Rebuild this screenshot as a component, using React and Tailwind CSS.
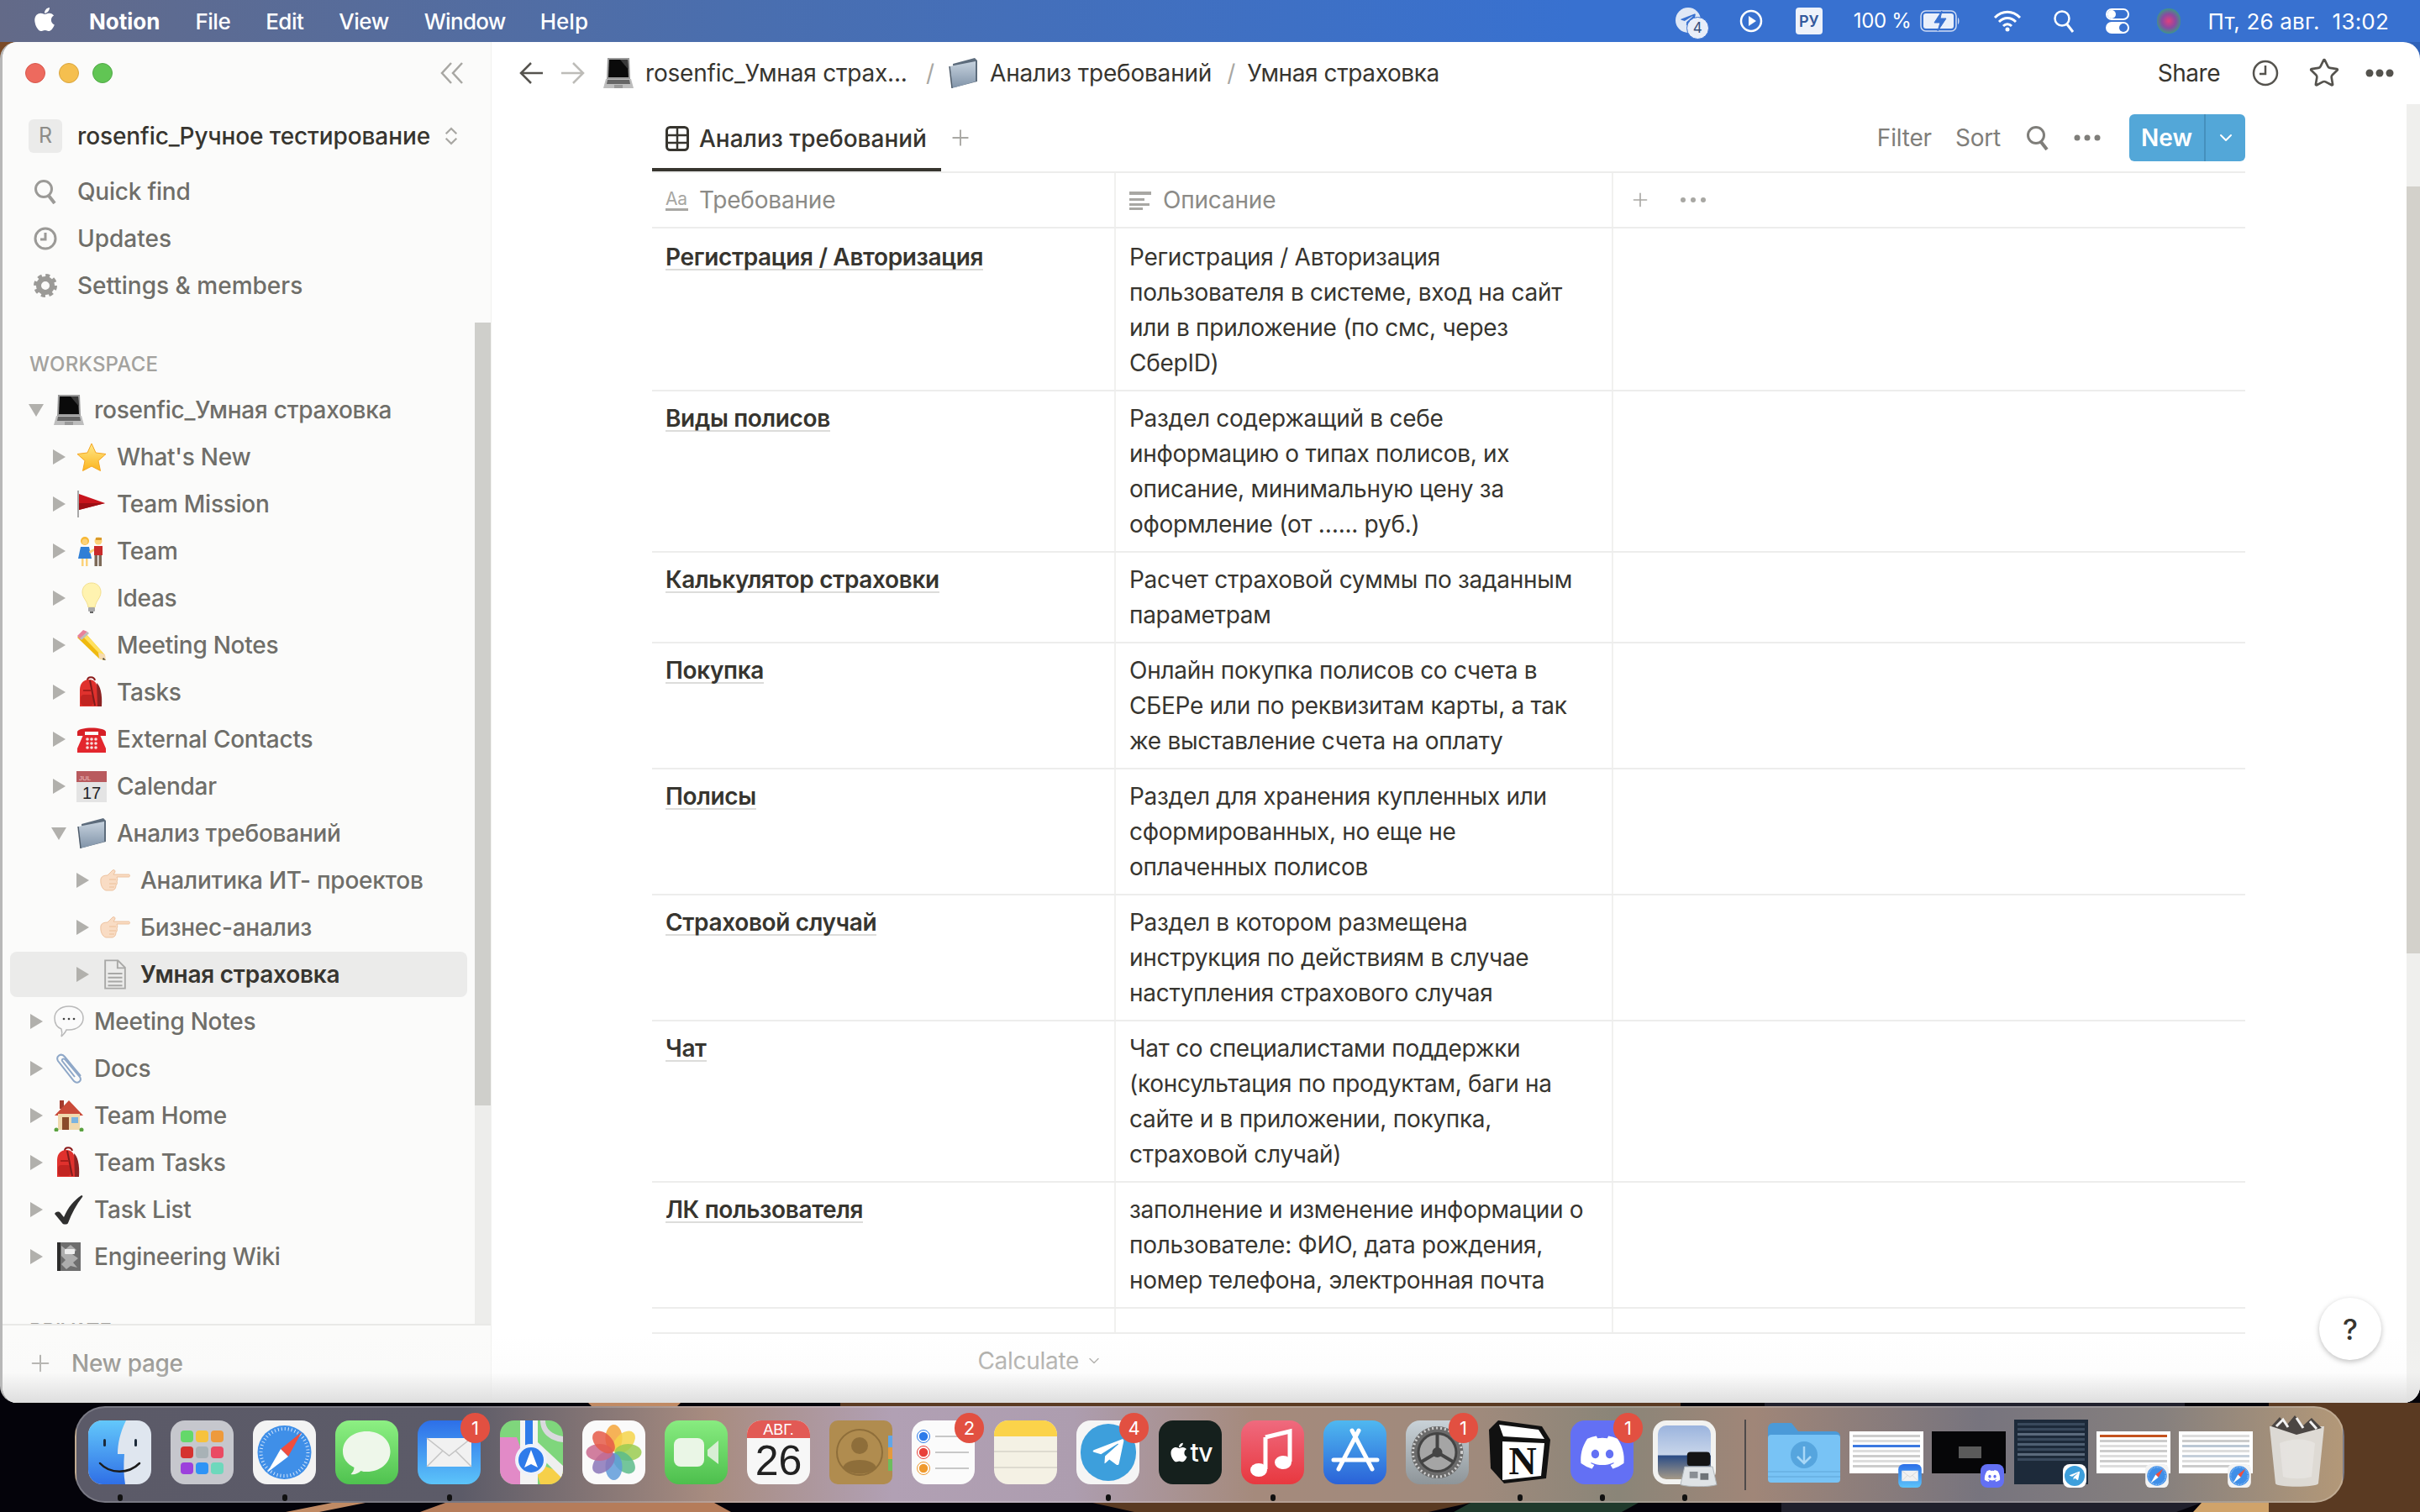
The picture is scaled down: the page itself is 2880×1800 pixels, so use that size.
import React from 'react';
import { FaApple, FaDiscord, FaTelegramPlane } from 'react-icons/fa';
import { ChevronDown, Plus, Star } from 'lucide-react';

/* ---------- page emoji (no colour emoji font on the box, so they are drawn) ---------- */
const Laptop = () => (
  <svg viewBox="0 0 36 38" className="w-[36px] h-[38px]">
    <path d="M5 1h26l1 25H4z" fill="#9a9a9a" />
    <path d="M7 3h22l1 21H6z" fill="#0a0a0a" />
    <path d="M20 3h9l1 12z" fill="#3a3a3a" />
    <path d="M3 26h30l3 11H0z" fill="#bdbdbd" />
    <path d="M5 27h26l1 5H4z" fill="#666" />
    <rect x="13" y="33" width="10" height="4" fill="#999" />
  </svg>
);
const StarE = () => (
  <svg viewBox="0 0 36 36" className="w-[36px] h-[36px]">
    <defs>
      <linearGradient id="st" x1="0" y1="0" x2="0" y2="1">
        <stop offset="0" stopColor="#ffe98a" />
        <stop offset="1" stopColor="#fbb41e" />
      </linearGradient>
    </defs>
    <path d="M18 2l5 11 12 1.500-9 8 2.500 12L18 29 7.500 34.500 10 22.500l-9-8L13 13z" fill="url(#st)" stroke="#f5a623" strokeWidth="1" strokeLinejoin="round" />
  </svg>
);
const Flag = () => (
  <svg viewBox="0 0 36 36" className="w-[36px] h-[36px]">
    <rect x="1" y="2" width="2" height="32" fill="#a8a8a8" />
    <path d="M3 6l31 11L3 25z" fill="#c8141c" />
    <path d="M3 17h31L3 25z" fill="#9c0e14" />
  </svg>
);
const Couple = () => (
  <svg viewBox="0 0 36 38" className="w-[36px] h-[38px]">
    <circle cx="10" cy="7" r="5" fill="#f7b733" />
    <circle cx="10" cy="8" r="3.500" fill="#fcd27a" />
    <path d="M5 14h10l3 14H2z" fill="#2f7fd6" />
    <rect x="6" y="28" width="2.500" height="9" fill="#fcd27a" />
    <rect x="11" y="28" width="2.500" height="9" fill="#fcd27a" />
    <circle cx="26" cy="7" r="4.500" fill="#fcd27a" />
    <path d="M23 3h7v3h-7z" fill="#d99a2b" />
    <rect x="21" y="13" width="10" height="11" fill="#c92a2a" />
    <rect x="21.500" y="24" width="3.500" height="13" fill="#7d6a58" />
    <rect x="26.500" y="24" width="3.500" height="13" fill="#7d6a58" />
    <path d="M15 19l6-3v3l-5 3z" fill="#fcd27a" />
  </svg>
);
const Bulb = () => (
  <svg viewBox="0 0 36 38" className="w-[36px] h-[38px]">
    <path d="M18 1c7 0 11 5 11 11 0 7-6 10-7 18h-8c-1-8-7-11-7-18C7 6 11 1 18 1z" fill="#fff3b0" stroke="#f3df8e" />
    <rect x="14" y="30" width="8" height="5" rx="1" fill="#a9a9a9" />
    <rect x="16" y="35" width="4" height="2" fill="#666" />
  </svg>
);
const Pencil = () => (
  <svg viewBox="0 0 36 38" className="w-[36px] h-[38px]">
    <path d="M9 3l25 28-1 6-6-2L1 10z" fill="#efb90f" />
    <path d="M9 3l25 28-3 2L5 6z" fill="#ffe15e" />
    <path d="M8 1L1 8l3 4 9-9z" fill="#e8829a" />
    <path d="M4 11l9-8 2 2-9 8z" fill="#bcbcbc" />
    <path d="M26 28l8 2 1 7-8-2z" fill="#f5dbb0" />
    <path d="M32 34l3 3-4-1z" fill="#333" />
  </svg>
);
const Bag = () => (
  <svg viewBox="0 0 36 38" className="w-[36px] h-[38px]">
    <path d="M13 5c0-5 8-5 9 0" fill="none" stroke="#8b1a1a" strokeWidth="2" />
    <path d="M4 16C4 8 9 4 15 4s10 4 10 12v20H4z" fill="#e0312d" />
    <path d="M24 8c4 3 7 12 6 28h-5z" fill="#8d2323" />
    <rect x="5" y="22" width="15" height="13" rx="4" fill="#c22421" />
    <path d="M16 5l6 30" stroke="#7d1c1c" strokeWidth="2" fill="none" />
    <rect x="8" y="16" width="10" height="2" fill="#a81e1b" />
  </svg>
);
const Phone = () => (
  <svg viewBox="0 0 36 36" className="w-[36px] h-[36px]">
    <path d="M1 9c2-6 32-6 34 0v5h-9V9H10v5H1z" fill="#d61f26" />
    <path d="M8 13h20l7 16v5H1v-5z" fill="#e3262d" />
    <g fill="#f6dede">
      <circle cx="13" cy="18" r="1.800" /><circle cx="18" cy="18" r="1.800" /><circle cx="23" cy="18" r="1.800" />
      <circle cx="13" cy="23" r="1.800" /><circle cx="18" cy="23" r="1.800" /><circle cx="23" cy="23" r="1.800" />
      <circle cx="13" cy="28" r="1.800" /><circle cx="18" cy="28" r="1.800" /><circle cx="23" cy="28" r="1.800" />
    </g>
  </svg>
);
const Cal = () => (
  <svg viewBox="0 0 36 38" className="w-[36px] h-[38px]">
    <rect y="1" width="36" height="13" fill="#b95a5e" />
    <rect y="14" width="36" height="24" fill="#e4e4e4" />
    <text x="3" y="12" fontSize="8" fill="#f0c5c5" fontFamily="Liberation Sans">JUL</text>
    <text x="18" y="34" textAnchor="middle" fontSize="20" fill="#222" fontFamily="Liberation Sans">17</text>
  </svg>
);
const Folder = () => (
  <svg viewBox="0 0 36 38" className="w-[36px] h-[38px]">
    <defs>
      <linearGradient id="fo" x1="0" y1="0" x2="0" y2="1"><stop offset="0" stopColor="#c6d2de" /><stop offset="1" stopColor="#8093a8" /></linearGradient>
    </defs>
    <path d="M6 8l26-7 3 3v25L8 36z" fill="#5d6c7c" />
    <path d="M2 11l31-6v24L5 37z" fill="url(#fo)" />
    <path d="M2 11l3 26" stroke="#4f5c6a" strokeWidth="1.500" />
  </svg>
);
const Hand = () => (
  <svg viewBox="0 0 36 26" className="w-[36px] h-[26px]">
    <path d="M1 11c1-3 4-4 8-4l6-6c2-1 3 0 3 2l-2 3h18c2 0 2 3 0 3H20c1 2 1 4 0 5 1 2 0 4-1 5 0 3-1 5-4 6H7c-4-1-7-7-6-14z" fill="#f9dcc4" stroke="#eab991" strokeWidth="0.800" />
    <path d="M11 12h8M11 17h8M11 21h6" stroke="#eab991" strokeWidth="0.800" />
  </svg>
);
const Doc = () => (
  <svg viewBox="0 0 28 38" className="w-[28px] h-[36px]">
    <path d="M1.500 1.500h16l9 9v26h-25z" fill="none" stroke="#a8a8a6" strokeWidth="2" />
    <path d="M17 2v9h9" fill="none" stroke="#a8a8a6" strokeWidth="2" />
    <path d="M5 18h18M5 23h18M5 28h18M5 33h18" stroke="#a8a8a6" strokeWidth="2" />
  </svg>
);
const Bubble = () => (
  <svg viewBox="0 0 36 38" className="w-[36px] h-[38px]">
    <path d="M18 1c10 0 17 6 17 14s-7 14-17 14h-3c-1 3-4 6-6 8 1-3 1-6 0-9C4 26 1 21 1 15 1 7 8 1 18 1z" fill="#fbfbfb" stroke="#b9b9b9" strokeWidth="1.500" />
    <circle cx="12" cy="16" r="1.300" fill="#444" /><circle cx="18" cy="16" r="1.300" fill="#444" /><circle cx="24" cy="16" r="1.300" fill="#444" />
  </svg>
);
const Clip = () => (
  <svg viewBox="0 0 36 38" className="w-[36px] h-[38px]">
    <path d="M32 28L13 5C9 0 2 4 5 10l19 24c4 4 10 0 7-5L14 9c-2-3-5-1-4 1l15 19" fill="none" stroke="#8fa8c8" strokeWidth="2" />
  </svg>
);
const House = () => (
  <svg viewBox="0 0 36 38" className="w-[36px] h-[38px]">
    <rect x="7" y="1" width="5" height="10" fill="#a33a2c" />
    <path d="M18 1L1 19h34z" fill="#c94a38" />
    <rect x="5" y="17" width="26" height="19" fill="#f0d9ae" />
    <rect x="10" y="21" width="8" height="15" fill="#8a4b2b" />
    <rect x="21" y="21" width="8" height="7" fill="#7cb4e0" />
    <circle cx="3" cy="36" r="2.500" fill="#5aa13f" /><circle cx="33" cy="36" r="2.500" fill="#5aa13f" />
  </svg>
);
const Check = () => (
  <svg viewBox="0 0 36 36" className="w-[36px] h-[36px]">
    <path d="M1 23c2-3 5-3 7-1l4 5C17 15 24 7 33 1c1 0 2 1 1 2-7 9-13 20-17 31-1 2-6 2-7 0z" fill="#2f2f2f" />
  </svg>
);
const Note = () => (
  <svg viewBox="0 0 32 38" className="w-[32px] h-[38px]">
    <rect x="2" y="2" width="28" height="34" fill="#2c2c2c" />
    <rect x="6" y="2" width="24" height="34" fill="#6e6e6e" />
    <path d="M7 6l5 4 6-5 7 6-5 5 7 5-6 5 5 6-8-2-5 4-6-6 5-5-5-5z" fill="#cfcfcf" opacity=".65" />
    <rect x="11" y="10" width="12" height="6" rx="1" fill="#eee" />
  </svg>
);

/* ---------- small ui glyphs ---------- */
const Tri = ({ open }) => (
  <svg viewBox="0 0 18 18" className="w-[18px] h-[18px]">
    {open ? <path d="M0 2h18L9 17z" fill="#b1b0ac" /> : <path d="M2 0l15 9-15 9z" fill="#b1b0ac" />}
  </svg>
);
const Dots = ({ r = 3.500, color = '#37352f' }) => (
  <svg viewBox="0 0 36 10" className="w-[36px] h-[10px]">
    <circle cx="6" cy="5" r={r} fill={color} />
    <circle cx="18" cy="5" r={r} fill={color} />
    <circle cx="30" cy="5" r={r} fill={color} />
  </svg>
);
const Search = ({ color, w = 28 }) => (
  <svg viewBox="0 0 28 30" style={{ width: w }} className="h-[30px]">
    <circle cx="12" cy="12" r="9.500" fill="none" stroke={color} strokeWidth="3" />
    <path d="M18 20l7 9" stroke={color} strokeWidth="4" />
  </svg>
);

const tree = [
  { t: 'rosenfic_Умная страховка', l: 0, E: Laptop, open: true },
  { t: "What's New", l: 1, E: StarE },
  { t: 'Team Mission', l: 1, E: Flag },
  { t: 'Team', l: 1, E: Couple },
  { t: 'Ideas', l: 1, E: Bulb },
  { t: 'Meeting Notes', l: 1, E: Pencil },
  { t: 'Tasks', l: 1, E: Bag },
  { t: 'External Contacts', l: 1, E: Phone },
  { t: 'Calendar', l: 1, E: Cal },
  { t: 'Анализ требований', l: 1, E: Folder, open: true },
  { t: 'Аналитика ИТ- проектов', l: 2, E: Hand },
  { t: 'Бизнес-анализ', l: 2, E: Hand },
  { t: 'Умная страховка', l: 2, E: Doc, active: true },
  { t: 'Meeting Notes', l: 0, E: Bubble },
  { t: 'Docs', l: 0, E: Clip },
  { t: 'Team Home', l: 0, E: House },
  { t: 'Team Tasks', l: 0, E: Bag },
  { t: 'Task List', l: 0, E: Check },
  { t: 'Engineering Wiki', l: 0, E: Note },
];
const indent = ['pl-[30px]', 'pl-[57px]', 'pl-[85px]'];

const rows = [
  ['Регистрация / Авторизация', ['Регистрация / Авторизация', 'пользователя в системе, вход на сайт', 'или в приложение (по смс, через', 'СберID)']],
  ['Виды полисов', ['Раздел содержащий в себе', 'информацию о типах полисов, их', 'описание, минимальную цену за', 'оформление (от …... руб.)']],
  ['Калькулятор страховки', ['Расчет страховой суммы по заданным', 'параметрам']],
  ['Покупка', ['Онлайн покупка полисов со счета в', 'СБЕРе или по реквизитам карты, а так', 'же выставление счета на оплату']],
  ['Полисы', ['Раздел для хранения купленных или', 'сформированных, но еще не', 'оплаченных полисов']],
  ['Страховой случай', ['Раздел в котором размещена', 'инструкция по действиям в случае', 'наступления страхового случая']],
  ['Чат', ['Чат со специалистами поддержки', '(консультация по продуктам, баги на', 'сайте и в приложении, покупка,', 'страховой случай)']],
  ['ЛК пользователя', ['заполнение и изменение информации о', 'пользователе: ФИО, дата рождения,', 'номер телефона, электронная почта']],
];

function Sidebar() {
  return (
    <aside className="w-[582px] shrink-0 flex flex-col bg-[#fbfbfa] border-r border-[#f1f1ef]">
      <div className="h-[74px] flex items-center pl-[27px] pr-[32px]">
        <span className="w-[24px] h-[24px] rounded-full bg-[#ed6a5e] border border-[#d8574c]" />
        <span className="w-[24px] h-[24px] rounded-full bg-[#f5bf4f] border border-[#d9a53e] ml-[16px]" />
        <span className="w-[24px] h-[24px] rounded-full bg-[#61c554] border border-[#52a948] ml-[16px]" />
        <svg viewBox="0 0 28 26" className="w-[28px] h-[26px] ml-auto">
          <path d="M13 1L2 13l11 12M26 1L15 13l11 12" fill="none" stroke="#a8a7a3" strokeWidth="2.500" />
        </svg>
      </div>
      <div className="h-[76px] flex items-center pl-[31px]">
        <span className="w-[40px] h-[40px] rounded-[6px] bg-[#ebebea] text-[#8d8c88] text-[25px] flex items-center justify-center">R</span>
        <span className="ml-[18px] text-[28px] font-medium text-[#37352f] tracking-[-0.1px] whitespace-nowrap">rosenfic_Ручное тестирование</span>
        <svg viewBox="0 0 20 26" className="w-[18px] h-[24px] ml-[16px]">
          <path d="M3 10l7-7 7 7M3 16l7 7 7-7" fill="none" stroke="#a8a7a3" strokeWidth="2.500" />
        </svg>
      </div>
      <div className="text-[28px] text-[#6f6e69] font-medium">
        <div className="h-[56px] flex items-center pl-[37px]">
          <Search color="#9b9a97" />
          <span className="ml-[24px] tracking-[-0.2px]">Quick find</span>
        </div>
        <div className="h-[56px] flex items-center pl-[37px]">
          <svg viewBox="0 0 28 28" className="w-[28px] h-[28px]">
            <circle cx="14" cy="14" r="12" fill="none" stroke="#9b9a97" strokeWidth="3" />
            <path d="M14 7v8H8" fill="none" stroke="#9b9a97" strokeWidth="3" />
          </svg>
          <span className="ml-[24px]">Updates</span>
        </div>
        <div className="h-[56px] flex items-center pl-[37px]">
          <svg viewBox="0 0 28 28" className="w-[28px] h-[28px]">
            <circle cx="14" cy="14" r="8" fill="none" stroke="#9b9a97" strokeWidth="6" />
            <circle cx="14" cy="14" r="12" fill="none" stroke="#9b9a97" strokeWidth="4" strokeDasharray="5 4.400" />
          </svg>
          <span className="ml-[24px]">Settings &amp; members</span>
        </div>
      </div>
      <div className="flex h-[1208px] overflow-hidden">
        <div className="w-[562px] shrink-0">
          <div className="h-[92px] pt-[51px] pl-[32px] text-[24px] leading-[30px] font-medium text-[#a3a29e] tracking-[0.2px]">WORKSPACE</div>
          {tree.map((r, i) => (
            <div
              key={i}
              className={r.active
                ? 'h-[54px] my-[1px] ml-[9px] w-[544px] pl-[76px] flex items-center rounded-[8px] bg-[#ebebea] text-[#37352f] font-semibold'
                : 'h-[56px] flex items-center text-[#6f6e69] font-medium ' + indent[r.l]}
            >
              <span className="w-[20px] flex justify-center"><Tri open={r.open} /></span>
              <span className="w-[36px] h-[40px] ml-[11px] flex items-center justify-center shrink-0"><r.E /></span>
              <span className="ml-[12px] text-[28px] tracking-[-0.25px] whitespace-nowrap">{r.t}</span>
            </div>
          ))}
          <div className="mt-[46px] pl-[32px] text-[24px] leading-[30px] font-medium text-[#a3a29e]">PRIVATE</div>
        </div>
        <div className="w-[20px] mt-[16px] bg-[#ededeb]">
          <div className="h-[932px] bg-[#cfcfcb]" />
        </div>
      </div>
      <div className="h-[92px] shrink-0 border-t-2 border-[#e9e9e7] flex items-center pl-[29px] text-[28px] text-[#8a8984]">
        <Plus size={32} strokeWidth={1.500} color="#a8a7a3" />
        <span className="ml-[21px] font-medium tracking-[-0.3px]">New page</span>
      </div>
    </aside>
  );
}

function TopBar() {
  return (
    <header className="h-[74px] shrink-0 flex items-center pl-[33px] text-[28px] text-[#37352f] whitespace-nowrap">
      <svg viewBox="0 0 30 30" className="w-[30px] h-[30px]">
        <path d="M14 3L2 15l12 12M2 15h26" fill="none" stroke="#55534e" strokeWidth="2.500" />
      </svg>
      <svg viewBox="0 0 30 30" className="w-[30px] h-[30px] ml-[18px]">
        <path d="M16 3l12 12-12 12M28 15H2" fill="none" stroke="#bdbcb8" strokeWidth="2.500" />
      </svg>
      <span className="ml-[22px] w-[36px]"><Laptop /></span>
      <span className="ml-[14px] w-[310px] tracking-[-0.2px]">rosenfic_Умная страх...</span>
      <span className="ml-[24px] text-[#a8a7a3]">/</span>
      <span className="ml-[16px] w-[36px]"><Folder /></span>
      <span className="ml-[14px] tracking-[-0.2px]">Анализ требований</span>
      <span className="ml-[18px] text-[#a8a7a3]">/</span>
      <span className="ml-[14px] tracking-[-0.4px]">Умная страховка</span>
      <span className="ml-auto tracking-[-0.5px]">Share</span>
      <svg viewBox="0 0 32 34" className="w-[32px] h-[34px] ml-[38px]">
        <circle cx="16" cy="17" r="14" fill="none" stroke="#55534e" strokeWidth="2.500" />
        <path d="M16 8v10h-7" fill="none" stroke="#55534e" strokeWidth="2.500" />
      </svg>
      <Star size={38} strokeWidth={1.700} color="#55534e" className="ml-[35px]" />
      <span className="ml-[29px] mr-[30px]"><Dots r={4.500} color="#55534e" /></span>
    </header>
  );
}

function Toolbar() {
  return (
    <div className="h-[82px] flex border-b-2 border-[#ededec] text-[28px]">
      <div className="w-[344px] h-[80px] border-b-4 border-[#37352f] flex items-center pl-[16px] pt-[6px] font-medium text-[#37352f]">
        <svg viewBox="0 0 28 30" className="w-[28px] h-[30px]">
          <rect x="1.500" y="1.500" width="25" height="27" rx="4" fill="none" stroke="#37352f" strokeWidth="3" />
          <path d="M2 11h24M2 20h24M14 2v26" stroke="#37352f" strokeWidth="2.500" />
        </svg>
        <span className="ml-[12px] whitespace-nowrap">Анализ требований</span>
      </div>
      <Plus size={30} strokeWidth={1.500} color="#a8a7a3" className="ml-[8px] mt-[25px]" />
      <div className="ml-auto flex items-center text-[#7f7e7a]">
        <span className="tracking-[-0.2px]">Filter</span>
        <span className="ml-[28px] tracking-[-0.2px]">Sort</span>
        <span className="ml-[30px]"><Search color="#7f7e7a" /></span>
        <span className="ml-[27px]"><Dots r={3.500} color="#7f7e7a" /></span>
        <div className="ml-[32px] w-[138px] h-[56px] rounded-[6px] bg-[#53a7d8] flex text-white font-semibold">
          <span className="w-[91px] pl-[14px] flex items-center border-r-2 border-[#4590bd]">New</span>
          <span className="flex-1 flex items-center justify-center"><ChevronDown size={24} strokeWidth={2} /></span>
        </div>
      </div>
    </div>
  );
}

function Table() {
  return (
    <div className="text-[28px] leading-[42px] text-[#37352f]">
      <div className="h-[66px] flex border-b-2 border-[#ededec] text-[#8c8b87] tracking-[-0.2px]">
        <div className="w-[552px] flex items-center pl-[16px] border-r-2 border-[#f1f1ef]">
          <svg viewBox="0 0 28 30" className="w-[28px] h-[30px]">
            <text x="0" y="21" fontSize="21" fill="#a8a7a3" fontFamily="Inter">Aa</text>
            <rect y="25" width="27" height="3" fill="#a8a7a3" />
          </svg>
          <span className="ml-[12px]">Требование</span>
        </div>
        <div className="w-[592px] flex items-center pl-[16px] border-r-2 border-[#f1f1ef]">
          <svg viewBox="0 0 26 26" className="w-[26px] h-[26px]">
            <path d="M0 3h26v4H0zM0 11h18v3H0zM0 17h24v3H0zM0 22h16v3H0z" fill="#a8a7a3" />
          </svg>
          <span className="ml-[14px]">Описание</span>
        </div>
        <div className="flex items-center pl-[19px]">
          <Plus size={26} strokeWidth={1.500} color="#a8a7a3" />
          <span className="ml-[32px]"><Dots r={3} color="#a8a7a3" /></span>
        </div>
      </div>
      {rows.map(([title, lines], i) => (
        <div key={title} className="flex border-b-2 border-[#ededec] whitespace-nowrap">
          <div className={'w-[552px] shrink-0 pl-[16px] pb-[11px] border-r-2 border-[#f1f1ef] font-semibold tracking-[-0.35px] ' + (i === 0 ? 'pt-[13px]' : 'pt-[11px]')}>
            <span className="border-b-2 border-[#dcdcda] leading-[28px] inline-block">{title}</span>
          </div>
          <div className={'w-[592px] shrink-0 pl-[16px] pb-[11px] border-r-2 border-[#f1f1ef] tracking-[-0.28px] ' + (i === 0 ? 'pt-[13px]' : 'pt-[11px]')}>
            {lines.map((l) => <div key={l}>{l}</div>)}
          </div>
        </div>
      ))}
      <div className="h-[30px] flex border-b-2 border-[#ededec]">
        <div className="w-[552px] border-r-2 border-[#f1f1ef]" />
        <div className="w-[592px] border-r-2 border-[#f1f1ef]" />
      </div>
      <div className="w-[552px] h-[64px] flex items-center justify-end pr-[16px] text-[#a8a7a3]">
        <span className="tracking-[-0.3px]">Calculate</span>
        <ChevronDown size={20} strokeWidth={1.800} className="ml-[8px]" />
      </div>
    </div>
  );
}

/* ---------- dock ---------- */
const Sq = ({ children, className }) => <div className={'w-[75px] h-[76px] rounded-[17px] overflow-hidden flex items-center justify-center ' + className}>{children}</div>;

const Finder = () => (
  <svg viewBox="0 0 75 76" className="w-[75px] h-[76px]">
    <defs>
      <linearGradient id="fi" x1="0" y1="0" x2="0" y2="1"><stop offset="0" stopColor="#63c8fb" /><stop offset="1" stopColor="#2f6fe6" /></linearGradient>
      <clipPath id="fc"><rect width="75" height="76" rx="17" /></clipPath>
    </defs>
    <g clipPath="url(#fc)">
      <rect width="75" height="76" fill="#dfe6ef" />
      <path d="M0 0h45c-7 14-10 28-10 40h8c-1 12-1 24 1 36H0z" fill="url(#fi)" />
    </g>
    <rect x="18" y="22" width="3" height="9" rx="1.500" fill="#1c2a3a" />
    <rect x="55" y="22" width="3" height="9" rx="1.500" fill="#1c2a3a" />
    <path d="M14 51c12 13 34 13 47 0" fill="none" stroke="#1c1c1c" strokeWidth="2.500" strokeLinecap="round" />
  </svg>
);
const Launchpad = () => (
  <Sq className="bg-[#c6c7cd]">
    <div className="grid grid-cols-3 gap-x-[3px] gap-y-[5px]">
      {['bg-[#64d86a]', 'bg-[#f6c23d]', 'bg-[#ee9a3c]', 'bg-[#d5322f]', 'bg-[#a8b2b6]', 'bg-[#ea4a63]', 'bg-[#9c40dc]', 'bg-[#2e93f5]', 'bg-[#6ed8bc]'].map((c) => (
        <span key={c} className={'w-[15px] h-[14px] rounded-[4px] ' + c} />
      ))}
    </div>
  </Sq>
);
const Safari = ({ className = 'w-[75px] h-[76px]' }) => (
  <svg viewBox="0 0 75 76" className={className}>
    <rect width="75" height="76" rx="17" fill="#f3f3f3" />
    <circle cx="37.500" cy="38" r="32" fill="#3f8fe8" />
    <circle cx="37.500" cy="38" r="28" fill="none" stroke="#d5e6fa" strokeWidth="4" strokeDasharray="1 3" />
    <path d="M58 14L33 34l9 9z" fill="#f04e3e" />
    <path d="M17 62l25-19-9-9z" fill="#fff" />
  </svg>
);
const Messages = () => (
  <svg viewBox="0 0 75 76" className="w-[75px] h-[76px]">
    <defs><linearGradient id="ms" x1="0" y1="0" x2="0" y2="1"><stop offset="0" stopColor="#8df083" /><stop offset="1" stopColor="#4fc24f" /></linearGradient></defs>
    <rect width="75" height="76" rx="17" fill="url(#ms)" />
    <path d="M37.500 13c16 0 28 10 28 24s-12 24-28 24c-3 0-5 0-7-1-3 3-8 5-12 4 2-2 4-5 4-8C14 52 9 45 9 37c0-14 12-24 28.500-24z" fill="#eef7ea" />
  </svg>
);
const Mail = ({ className = 'w-[75px] h-[76px]' }) => (
  <svg viewBox="0 0 75 76" className={className}>
    <defs><linearGradient id="ml" x1="0" y1="0" x2="0" y2="1"><stop offset="0" stopColor="#2d6fe8" /><stop offset="1" stopColor="#5cc4fa" /></linearGradient></defs>
    <rect width="75" height="76" rx="17" fill="url(#ml)" />
    <rect x="11" y="21" width="53" height="34" rx="2" fill="#f1f1f1" />
    <path d="M11 21l26.500 21L64 21M11 55l19-19M64 55L45 36" fill="none" stroke="#c4c4c4" strokeWidth="1.500" />
  </svg>
);
const Maps = () => (
  <svg viewBox="0 0 75 76" className="w-[75px] h-[76px]">
    <defs><clipPath id="mc"><rect width="75" height="76" rx="17" /></clipPath></defs>
    <g clipPath="url(#mc)">
      <rect width="75" height="76" fill="#7fd67c" />
      <path d="M0 20h20l20 56H0z" fill="#e28ac7" />
      <path d="M40 50l35 12v14H48z" fill="#f6d04a" />
      <rect x="24" y="0" width="21" height="76" fill="#f3f3f3" />
      <rect x="30" y="0" width="9" height="32" fill="#2e7bea" />
      <path d="M48 0c0 14 10 24 27 26v-7C62 17 54 10 54 0z" fill="#d9d9dd" />
      <path d="M45 40l30 30v-16L45 26z" fill="#efefef" />
      <circle cx="37" cy="47" r="19" fill="#eef2fa" />
      <circle cx="37" cy="47" r="15" fill="#2e7bea" />
      <path d="M37 35l8 21-8-4-8 4z" fill="#fff" />
    </g>
  </svg>
);
const Photos = () => (
  <svg viewBox="0 0 75 76" className="w-[75px] h-[76px]">
    <rect width="75" height="76" rx="17" fill="#fafafa" />
    {['#f5a43a', '#f4d44a', '#9acb50', '#5cbb8a', '#5f9bd9', '#8a75b8', '#c9688e', '#e55a48'].map((c, i) => (
      <ellipse key={c} cx="37.500" cy="21" rx="10" ry="16" fill={c} opacity=".85" transform={'rotate(' + i * 45 + ' 37.500 38)'} />
    ))}
  </svg>
);
const FaceTime = () => (
  <svg viewBox="0 0 75 76" className="w-[75px] h-[76px]">
    <defs><linearGradient id="ft" x1="0" y1="0" x2="0" y2="1"><stop offset="0" stopColor="#88ec80" /><stop offset="1" stopColor="#4dbf4d" /></linearGradient></defs>
    <rect width="75" height="76" rx="17" fill="url(#ft)" />
    <rect x="11" y="21" width="36" height="34" rx="8" fill="#eaf6e6" />
    <path d="M51 35l13-11v28L51 42z" fill="#d8eed4" />
  </svg>
);
const CalIcon = () => (
  <div className="w-[75px] h-[76px] rounded-[17px] overflow-hidden bg-[#f7f7f7] flex flex-col items-center font-[family-name:'Liberation_Sans',sans-serif]">
    <div className="w-full h-[21px] bg-[#e25a55] text-white text-[18px] leading-[22px] text-center">АВГ.</div>
    <div className="text-[50px] leading-[54px] text-[#222]">26</div>
  </div>
);
const Contacts = () => (
  <svg viewBox="0 0 75 76" className="w-[75px] h-[76px]">
    <rect width="75" height="76" rx="10" fill="#b08c4f" />
    <rect x="70" y="18" width="5" height="14" fill="#60a6e8" /><rect x="70" y="32" width="5" height="14" fill="#e59a3c" /><rect x="70" y="46" width="5" height="14" fill="#6cbd5d" />
    <circle cx="36" cy="38" r="27" fill="none" stroke="#8e6e3a" strokeWidth="2" />
    <circle cx="36" cy="30" r="10" fill="#8e6e3a" />
    <path d="M16 56c4-12 36-12 40 0-10 10-30 10-40 0z" fill="#8e6e3a" />
  </svg>
);
const Reminders = () => (
  <svg viewBox="0 0 75 76" className="w-[75px] h-[76px]">
    <rect width="75" height="76" rx="17" fill="#fbfbfb" />
    {[['#2e7bea', 19], ['#e8403a', 38], ['#ef9a2e', 57]].map(([c, y]) => (
      <g key={c}>
        <circle cx="14" cy={y} r="6" fill={c} stroke="#fff" strokeWidth="1.500" />
        <circle cx="14" cy={y} r="7.500" fill="none" stroke={c} />
        <rect x="28" y={y - 1} width="40" height="2" fill="#c8c8c8" />
      </g>
    ))}
  </svg>
);
const Notes = () => (
  <svg viewBox="0 0 75 76" className="w-[75px] h-[76px]">
    <defs><clipPath id="nc"><rect width="75" height="76" rx="17" /></clipPath></defs>
    <g clipPath="url(#nc)">
      <rect width="75" height="76" fill="#f4f1e4" />
      <rect width="75" height="19" fill="#fbd34a" />
      <path d="M0 37h75M0 56h75" stroke="#d6d3c8" strokeWidth="1.500" />
    </g>
  </svg>
);
const Telegram = () => (
  <Sq className="bg-[#f5f5f5]">
    <div className="w-[66px] h-[68px] rounded-full bg-[#3d9fdc] flex items-center justify-center text-white"><FaTelegramPlane size={42} /></div>
  </Sq>
);
const TV = () => (
  <Sq className="bg-[#15201d] text-white">
    <FaApple size={26} />
    <span className="text-[30px] font-medium leading-none tracking-[-1px]">tv</span>
  </Sq>
);
const Music = () => (
  <svg viewBox="0 0 75 76" className="w-[75px] h-[76px]">
    <defs><linearGradient id="mu" x1="0" y1="0" x2="0" y2="1"><stop offset="0" stopColor="#ef6a7e" /><stop offset="1" stopColor="#e8383f" /></linearGradient></defs>
    <rect width="75" height="76" rx="17" fill="url(#mu)" />
    <path d="M29 20l29-7v36" fill="none" stroke="#fff" strokeWidth="5" />
    <path d="M29 20v38" stroke="#fff" strokeWidth="5" />
    <ellipse cx="21" cy="59" rx="10" ry="8" fill="#fff" /><ellipse cx="50" cy="50" rx="10" ry="8" fill="#fff" />
  </svg>
);
const AppStore = () => (
  <svg viewBox="0 0 75 76" className="w-[75px] h-[76px]">
    <defs><linearGradient id="as" x1="0" y1="0" x2="0" y2="1"><stop offset="0" stopColor="#4fb8f0" /><stop offset="1" stopColor="#2a62d8" /></linearGradient></defs>
    <rect width="75" height="76" rx="17" fill="url(#as)" />
    <path d="M42 12L18 58M34 12l24 46M12 47h52" stroke="#fff" strokeWidth="5" strokeLinecap="round" fill="none" />
  </svg>
);
const Gear = () => (
  <svg viewBox="0 0 75 76" className="w-[75px] h-[76px]">
    <defs><linearGradient id="ge" x1="0" y1="0" x2="0" y2="1"><stop offset="0" stopColor="#c9d2d8" /><stop offset="1" stopColor="#8e9599" /></linearGradient></defs>
    <rect width="75" height="76" rx="17" fill="url(#ge)" />
    <circle cx="37.500" cy="38" r="31" fill="#6b6b6b" />
    <circle cx="37.500" cy="38" r="29" fill="none" stroke="#d0d0d0" strokeWidth="3" strokeDasharray="2 3" />
    <circle cx="37.500" cy="38" r="24" fill="#444" />
    <circle cx="37.500" cy="38" r="21" fill="#a5a5a5" />
    <circle cx="37.500" cy="38" r="6" fill="#444" />
    <path d="M37.500 38V17M37.500 38L19 49M37.500 38L56 49" stroke="#444" strokeWidth="4" />
  </svg>
);
const NotionIcon = () => (
  <svg viewBox="0 0 75 80" className="w-[75px] h-[80px] -mt-[3px]">
    <path d="M12 3l52 7 10 16-5 46-50 6-16-18L1 14z" fill="#111" />
    <path d="M13 8l47 6 7 11-49-3z" fill="#fff" />
    <path d="M17 28l50 2-4 39-46 5z" fill="#fff" />
    <text x="41" y="67" textAnchor="middle" fontSize="46" fontWeight="700" fontFamily="Liberation Serif" fill="#111">N</text>
  </svg>
);
const Discord = () => (
  <Sq className="bg-[#6370f4] text-white"><FaDiscord size={56} /></Sq>
);
const Preview = () => (
  <div className="w-[75px] h-[76px] relative">
    <svg viewBox="0 0 75 76" className="w-[75px] h-[76px]">
      <defs>
        <linearGradient id="pv" x1="0" y1="0" x2="0" y2="1"><stop offset="0" stopColor="#9bb4de" /><stop offset=".55" stopColor="#c9d6ea" /><stop offset=".56" stopColor="#2a4c86" /><stop offset="1" stopColor="#a59a88" /></linearGradient>
      </defs>
      <rect width="75" height="76" rx="16" fill="#f2f2f0" />
      <rect x="6" y="6" width="63" height="64" rx="10" fill="url(#pv)" />
    </svg>
    <svg viewBox="0 0 46 42" className="absolute -right-[2px] -bottom-[3px] w-[45px] h-[42px]">
      <rect x="9" y="0" width="28" height="17" rx="4" fill="#141414" />
      <path d="M6 18h34l5 22c-10 3-34 3-44 0z" fill="#dfe3e6" stroke="#aeb4b8" />
      <rect x="12" y="24" width="10" height="8" fill="#8a8f94" /><rect x="25" y="26" width="10" height="8" fill="#6f7478" />
    </svg>
  </div>
);
const DownloadsFolder = () => (
  <svg viewBox="0 0 86 74" className="w-[86px] h-[74px]">
    <path d="M0 8a6 6 0 0 1 6-6h22l8 10h44a6 6 0 0 1 6 6v12H0z" fill="#4b9ad8" />
    <path d="M0 20a4 4 0 0 1 4-4h78a4 4 0 0 1 4 4v49a4 4 0 0 1-4 4H4a4 4 0 0 1-4-4z" fill="#78c3f5" />
    <path d="M0 60h86M0 66h86" stroke="#6bb4e6" strokeWidth="2" />
    <ellipse cx="43" cy="40" rx="16" ry="16" fill="#56a5de" />
    <path d="M43 30v20M35 42l8 8 8-8" fill="none" stroke="#a8d8f8" strokeWidth="2.500" />
  </svg>
);
const Trash = () => (
  <svg viewBox="0 0 68 88" className="w-[68px] h-[88px]">
    <path d="M2 14l7 68c1 5 49 5 51 0l7-68z" fill="#e6e6e4" opacity=".85" />
    <path d="M4 14L14 3l8 10L32 1l10 12 10-9 12 12-30 8z" fill="#4b4643" />
    <path d="M10 14l8-8 6 9M34 4l8 12M50 8l8 9" stroke="#f2f2f2" strokeWidth="3" fill="none" />
    <path d="M14 34c14-6 32-6 42 0l-4 40c-10 3-24 3-34 0z" fill="#fff" opacity=".25" />
  </svg>
);

const Thumb = ({ className, lines, children, tall }) => (
  <div className={'w-[88px] shrink-0 relative ' + (tall ? 'h-[77px] -mt-[1px] ' : 'h-[50px] mt-[13px] ') + className}>
    {lines && (
      <div className="p-[4px] flex flex-col gap-[3px]">
        {lines.map((c, i) => <span key={i} className={'block h-[3px] ' + c} />)}
      </div>
    )}
    {children}
  </div>
);

const dock = [
  { I: Finder, dot: true }, { I: Launchpad }, { I: Safari, dot: true }, { I: Messages },
  { I: Mail, badge: 1, dot: true }, { I: Maps }, { I: Photos }, { I: FaceTime }, { I: CalIcon }, { I: Contacts },
  { I: Reminders, badge: 2 }, { I: Notes }, { I: Telegram, badge: 4, dot: true }, { I: TV },
  { I: Music, dot: true }, { I: AppStore }, { I: Gear, badge: 1 }, { I: NotionIcon, dot: true },
  { I: Discord, badge: 1, dot: true }, { I: Preview, dot: true },
];

function Dock() {
  return (
    <div className="relative ml-[89px] mt-[4px] w-[2701px] h-[115px] rounded-[36px] border-2 border-[#ffffff30] pt-[15px] pl-[14px] flex bg-[linear-gradient(90deg,#5b5a68_0%,#5c5b68_17%,#a88c80_28%,#b1a0b4_36%,#ad9daf_44%,#a58a7c_52%,#9f8a7c_62%,#8a8578_68%,#a08678_74%,#77747e_84%,#86807e_92%,#b39878_100%)]">
      <div className="flex gap-[23px]">
        {dock.map((d, i) => (
          <div key={i} className="relative w-[75px] flex flex-col items-center">
            <div className="h-[76px]"><d.I /></div>
            {d.dot && <span className="mt-[12px] w-[6px] h-[8px] rounded-full bg-[#111]" />}
            {d.badge && (
              <span className="absolute -top-[9px] -right-[11px] w-[35px] h-[36px] rounded-full bg-[#e25041] text-white text-[22px] flex items-center justify-center">{d.badge}</span>
            )}
          </div>
        ))}
      </div>
      <span className="ml-[34px] -mt-[1px] w-[2px] h-[84px] bg-[#4e4a4a]" />
      <div className="ml-[26px] mt-[1px]"><DownloadsFolder /></div>
      <div className="ml-[11px] flex gap-[10px]">
        <Thumb className="bg-white" lines={['bg-[#ccc]', 'bg-[#ddd]', 'bg-[#3b78e0]', 'bg-[#ddd]', 'bg-[#ccc]', 'bg-[#ddd]', 'bg-[#ccc]']}>
          <span className="absolute right-[2px] top-[39px]"><Mail className="w-[28px] h-[28px]" /></span>
        </Thumb>
        <Thumb className="bg-[#060608]">
          <span className="absolute left-[32px] top-[18px] w-[27px] h-[14px] bg-[#5a5a5a]" />
          <span className="absolute right-[2px] top-[39px] w-[28px] h-[28px] rounded-[8px] bg-[#6370f4] text-white flex items-center justify-center"><FaDiscord size={20} /></span>
        </Thumb>
        <Thumb tall className="bg-[#1d2a3a]" lines={['bg-[#39495c]', 'bg-[#39495c]', 'bg-[#5b6a7c]', 'bg-[#39495c]', 'bg-[#4f6073]', 'bg-[#39495c]', 'bg-[#5b6a7c]', 'bg-[#39495c]']}>
          <span className="absolute right-[2px] top-[53px] w-[28px] h-[28px] rounded-[8px] bg-white flex items-center justify-center">
            <span className="w-[24px] h-[24px] rounded-full bg-[#3d9fdc] text-white flex items-center justify-center"><FaTelegramPlane size={14} /></span>
          </span>
        </Thumb>
        <Thumb className="bg-white" lines={['bg-[#c4521e]', 'bg-[#ccc]', 'bg-[#ddd]', 'bg-[#ccc]', 'bg-[#ddd]', 'bg-[#ccc]', 'bg-[#ddd]']}>
          <span className="absolute right-[2px] top-[39px]"><Safari className="w-[28px] h-[28px]" /></span>
        </Thumb>
        <Thumb className="bg-white" lines={['bg-[#ddd]', 'bg-[#ccc]', 'bg-[#bbc7d4]', 'bg-[#ddd]', 'bg-[#c5cfda]', 'bg-[#ddd]', 'bg-[#ccc]']}>
          <span className="absolute right-[2px] top-[39px]"><Safari className="w-[28px] h-[28px]" /></span>
        </Thumb>
      </div>
      <div className="ml-[18px] -mt-[7px]"><Trash /></div>
    </div>
  );
}

const Wallpaper = () => (
  <svg viewBox="0 0 2880 1800" className="absolute inset-0 w-[2880px] h-[1800px]">
    <rect width="2880" height="1800" fill="#04030a" />
    <rect y="50" width="640" height="30" fill="#7a4a26" />
    <rect x="640" y="50" width="2240" height="30" fill="#2f62b8" />
    <path d="M340 1800l60-12h40l-60 12zM700 1670h110l-10 10h-90z" fill="#c08a64" />
    <path d="M530 1789h320l20 11H500z" fill="#b57c5a" />
    <path d="M1000 1670h1000v10H1000zM1300 1789h450l-50 11h-350z" fill="#5a3a22" />
    <path d="M1750 1789h200l-20 11h-200z" fill="#1f3a2c" />
    <path d="M2100 1670h500v10h-500zM2120 1789h500l-30 11h-470z" fill="#20202c" />
    <path d="M2620 1789h90v11h-100z" fill="#d0a36a" />
    <path d="M2700 1670h180v130h-180z" fill="#5a3a22" />
  </svg>
);

function MenuBar() {
  return (
    <div className="relative h-[50px] flex items-center text-white text-[26px] whitespace-nowrap bg-[linear-gradient(90deg,#636a88,#4a6eae_30%,#3871d0_65%)]">
      <FaApple size={32} className="ml-[37px] -mt-[4px]" />
      <span className="ml-[37px] font-bold">Notion</span>
      <span className="ml-[42px] font-medium tracking-[-0.5px]">File</span>
      <span className="ml-[42px] font-medium tracking-[-0.5px]">Edit</span>
      <span className="ml-[42px] font-medium tracking-[-0.5px]">View</span>
      <span className="ml-[42px] font-medium tracking-[-0.7px]">Window</span>
      <span className="ml-[41px] font-medium">Help</span>
      <span className="ml-auto relative w-[40px] h-[40px]">
        <span className="absolute left-0 top-[4px] w-[30px] h-[30px] rounded-full bg-[#dfe8f6] flex items-center justify-center text-[#3871d0]"><FaTelegramPlane size={20} /></span>
        <span className="absolute right-0 top-[15px] w-[27px] h-[27px] rounded-full bg-[#e8eef9] border border-[#3871d0] text-[#36507c] text-[17px] flex items-center justify-center">4</span>
      </span>
      <svg viewBox="0 0 28 30" className="w-[28px] h-[30px] ml-[36px]">
        <circle cx="14" cy="15" r="12" fill="none" stroke="#fff" strokeWidth="2.500" />
        <path d="M11 9l9 6-9 6z" fill="#fff" />
      </svg>
      <span className="ml-[39px] w-[32px] h-[32px] rounded-[4px] bg-[#eef2fa] text-[#34599c] text-[18px] font-semibold flex items-center justify-center">РУ</span>
      <span className="ml-[37px] text-[24px] tracking-[-0.3px]">100 %</span>
      <svg viewBox="0 0 48 26" className="w-[48px] h-[26px] ml-[10px]">
        <rect x="1" y="1" width="42" height="24" rx="6" fill="none" stroke="#cfdcf4" strokeWidth="1.500" />
        <rect x="4" y="4" width="36" height="18" rx="3" fill="#eaf0fb" />
        <path d="M45 9c2 1 2 7 0 8z" fill="#cfdcf4" />
        <path d="M26 1l-9 14h7l-3 10 10-15h-7z" fill="#3871d0" stroke="#3871d0" />
      </svg>
      <svg viewBox="0 0 34 26" className="w-[34px] h-[26px] ml-[39px]">
        <path d="M2 9c9-9 21-9 30 0M7 14c6-6 14-6 20 0M12 19c3-3 7-3 10 0" fill="none" stroke="#fff" strokeWidth="3" />
        <circle cx="17" cy="23" r="2.500" fill="#fff" />
      </svg>
      <svg viewBox="0 0 26 28" className="w-[26px] h-[28px] ml-[37px]">
        <circle cx="11" cy="11" r="8.500" fill="none" stroke="#fff" strokeWidth="2.500" />
        <path d="M17 18l7 9" stroke="#fff" strokeWidth="3" />
      </svg>
      <span className="ml-[37px] w-[28px] flex flex-col gap-[2px]">
        <span className="h-[14px] rounded-full border-2 border-white flex justify-start"><span className="w-[10px] h-[10px] rounded-full bg-white" /></span>
        <span className="h-[14px] rounded-full bg-white flex justify-end"><span className="w-[10px] h-[10px] mt-[2px] mr-[2px] rounded-full bg-[#3871d0]" /></span>
      </span>
      <span className="ml-[33px] w-[28px] h-[30px] rounded-full bg-[radial-gradient(circle_at_50%_50%,#e0407e_0%,#8a4aa0_40%,#3a9a86_75%,#2a3a52_100%)]" />
      <span className="ml-[33px] mr-[37px] tracking-[0.2px] text-[26px]">Пт, 26 авг.&nbsp;&nbsp;13:02</span>
    </div>
  );
}

export default function App() {
  return (
    <div className="relative w-[2880px] h-[1800px] overflow-hidden font-[family-name:Inter,'Noto_Sans',sans-serif]">
      <Wallpaper />
      <MenuBar />
      <div className="relative h-[1620px] flex bg-white rounded-[20px] overflow-hidden border-l-[3px] border-[#b8b8b8]">
        <Sidebar />
        <main className="flex-1 flex flex-col min-w-0">
          <TopBar />
          <div className="flex flex-1 min-h-0">
            <div className="flex-1 pl-[191px] pr-[192px] min-w-0">
              <Toolbar />
              <Table />
            </div>
            <div className="w-[16px] bg-[#efefed]">
              <div className="h-[98px]" />
              <div className="h-[913px] bg-[#d3d1cb]" />
            </div>
          </div>
        </main>
        <div className="absolute left-0 right-0 bottom-0 h-[80px] pointer-events-none bg-linear-to-b from-transparent via-[#f6f6f640] via-55% to-[#dedede]" />
        <div className="absolute left-[2757px] top-[1495px] w-[74px] h-[74px] rounded-full bg-white shadow-[0_2px_6px_rgba(0,0,0,0.25)] flex items-center justify-center text-[34px] font-medium text-[#37352f]">?</div>
      </div>
      <Dock />
    </div>
  );
}
